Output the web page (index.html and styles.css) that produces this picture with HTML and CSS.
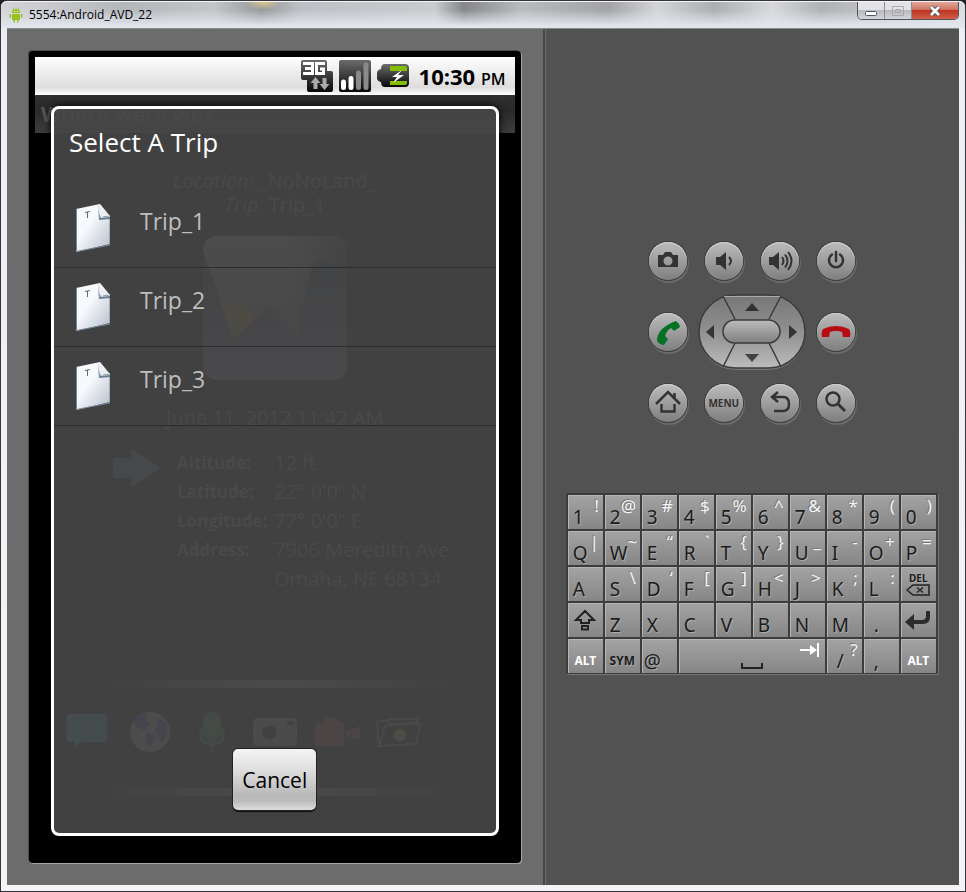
FILE: index.html
```
<!DOCTYPE html>
<html lang="en">
<head>
<meta charset="utf-8">
<meta name="viewport" content="width=device-width, initial-scale=1">
<title>5554:Android_AVD_22</title>
<link rel="stylesheet" href="styles.css">
</head>
<body>
<div class="window">
  <header class="titlebar">
    <svg class="droid" viewBox="0 0 14 16" aria-hidden="true"><path fill="#97c024" d="M3 6V5q0-3 4-3t4 3v1zM3 7h8v6H9.500v2.500H8V13H6v2.500H4.500V13H3zM.5 7H2v4H.5zM12 7h1.500v4H12z"/><path stroke="#97c024" d="M4 .5l1.500 2M10 .5l-1.500 2"/><path fill="#fff" d="M5 4h1v1H5zM8 4h1v1H8z"/></svg>
    <span class="window-title">5554:Android_AVD_22</span>
    <div class="window-controls">
      <button class="wc" aria-label="Minimize"><svg viewBox="0 0 14 12"><rect x="1.500" y="6.500" width="11" height="4" rx="1" fill="#fff" stroke="#535666"/></svg></button>
      <button class="wc" aria-label="Maximize"><svg viewBox="0 0 14 12"><path fill="none" stroke="#aaa" d="M1.500 1.500h11v9h-11zM4.500 4.500h5v3h-5z"/></svg></button>
      <button class="wc wc-close" aria-label="Close"><svg viewBox="0 0 14 12"><path d="M3 2l8 8M11 2l-8 8" stroke="#50505e" stroke-width="4.500"/><path d="M3 2l8 8M11 2l-8 8" stroke="#fff" stroke-width="2.500"/></svg></button>
    </div>
  </header>

  <main class="client">
    <section class="phone-pane">
      <div class="device">
        <div class="statusbar">
          <svg class="st" viewBox="0 0 32 32" aria-hidden="true"><defs><linearGradient id="dk" x2="0" y2="1"><stop stop-color="#6b6b6b"/><stop offset="1" stop-color="#080808"/></linearGradient></defs><path fill="url(#dk)" d="M2 0h22q2 0 2 2v9h4q2 0 2 2v17q0 2-2 2H8q-2 0-2-2V20H2q-2 0-2-2V2q0-2 2-2z"/><path fill="none" stroke="#fff" stroke-width="3" d="M2 3.500h9.500v10H2M4 8.500h7M24 3.500h-8.500v10h7V9H19"/><path fill="#aaa" d="M14.500 17l5 6h-3v6h-4v-6h-3zM23.500 30l5-6h-3v-6h-4v6h-3z"/></svg>
          <svg class="st" viewBox="0 0 32 32" aria-hidden="true"><rect width="32" height="32" rx="2" fill="url(#dk)"/><g stroke-width="5" stroke-linecap="round"><path stroke="#fff" d="M4.500 22v5.500M12 18.500v9"/><path stroke="#8a8a8a" d="M19.500 13v14.500M27 5v22.500"/></g></svg>
          <svg class="st" viewBox="0 0 32 32" aria-hidden="true"><path fill="url(#dk)" d="M8 4h20q4 0 4 4v15q0 4-4 4H8q-4 0-4-5-4-1-4-4v-5q0-3 4-4 0-5 4-5z"/><path fill="#86bd00" d="M13 6h15q2 0 2 2v3H13zM13 21h17v2q0 2-2 2H13z"/><path fill="#fff" d="M25 10l-10 7h5l-4 6 11-8h-6z"/></svg>
          <span class="clock">10:30 <small>PM</small></span>
        </div>
        <div class="stage">
          <div class="app">
            <h1 class="app-title">Where were we?</h1>
            <div class="app-body">
              <p class="where"><i>Location:</i> _NoNoLand_<br><i>Trip:</i> Trip_1</p>
              <svg class="photo" viewBox="0 0 144 144" aria-hidden="true"><defs><linearGradient id="sky" x2="0" y2="1"><stop stop-color="#7c8a7c"/><stop offset="1" stop-color="#5a505c"/></linearGradient><linearGradient id="land" x2="0" y2="1"><stop stop-color="#10202c"/><stop offset=".4" stop-color="#34384c"/><stop offset="1" stop-color="#706890"/></linearGradient><linearGradient id="fade" x2="1" y2="0"><stop offset=".6" stop-color="#000" stop-opacity="0"/><stop offset="1" stop-color="#000" stop-opacity=".7"/></linearGradient><clipPath id="pc"><rect width="144" height="144" rx="14"/></clipPath></defs><g clip-path="url(#pc)"><path fill="url(#sky)" d="M0 0h144v144H0z"/><path fill="url(#fade)" d="M0 0h144v80H0z"/><path fill="#a0702c" d="M14 68q24-8 38 16L30 104z"/><path fill="#70803c" d="M18 80l22 10-10 14z"/><path fill="url(#land)" d="M0 14l30 90 36-34 30 28q8-60 16-72h32v118H0z"/></g></svg>
              <p class="when">June 11, 2012 11:42 AM</p>
              <div class="facts">
                <svg class="arrow" viewBox="0 0 48 40" aria-hidden="true"><path fill="#3c688c" d="M0 10h18V0l30 20-30 20V30H0z"/></svg>
                <dl>
                  <dt>Altitude:</dt><dd>12 ft</dd>
                  <dt>Latitude:</dt><dd>22° 0'0" N</dd>
                  <dt>Longitude:</dt><dd>77° 0'0" E</dd>
                  <dt>Address:</dt><dd>7906 Meredith Ave<br>Omaha, NE 68134</dd>
                </dl>
              </div>
              <div class="glow"></div>
              <div class="tools">
                <svg viewBox="0 0 44 44" aria-hidden="true"><path fill="#289098" d="M4 4h32q4 0 4 4v20q0 4-4 4H14l-7 5 1-5H4q-4 0-4-4V8q0-4 4-4z"/></svg>
                <svg viewBox="0 0 44 44" aria-hidden="true"><circle cx="21" cy="22" r="20" fill="#88888e"/><path fill="#3838a0" d="M4 10q8-8 16-5l-4 5 6 4-8 6-8-4zM17 22l10 3-6 13-4-8zM27 8l10 4 2 12-6 8-8-12 5-5z"/></svg>
                <svg viewBox="0 0 44 44" aria-hidden="true"><rect x="12" y="2" width="18" height="30" rx="9" fill="#288048"/><path fill="none" stroke="#288048" stroke-width="3" d="M10 18v7q0 9 11 9t11-9v-7M21 34v9"/></svg>
                <svg viewBox="0 0 44 44" aria-hidden="true"><path fill="#7c7c84" fill-rule="evenodd" d="M5 8h34q5 0 5 5v18q0 5-5 5H5q-5 0-5-5V13q0-5 5-5zm14 8a7 7 0 100 13 7 7 0 000-13zm15-5v4h7v-4z"/></svg>
                <svg viewBox="0 0 44 44" aria-hidden="true"><path fill="#8c3848" d="M4 12h4l3-4h11l3 4h4v24H0V14zM31 22l14-6v14l-14-4z"/></svg>
                <svg viewBox="0 0 44 44" aria-hidden="true"><path fill="none" stroke="#8c6048" stroke-width="2" d="M2 36L0 12l10-2 3 4h30l-4 20zM2 36l6-20 32-4v-3H12"/><circle cx="23" cy="25" r="6" fill="#a88838"/></svg>
              </div>
              <div class="glow glow-low"></div>
            </div>
          </div>

          <div class="dialog" role="dialog" aria-labelledby="dlg-title">
            <h2 id="dlg-title">Select A Trip</h2>
            <svg width="0" height="0" class="defs" aria-hidden="true"><defs><linearGradient id="paper" x2="1" y2="1"><stop offset=".4" stop-color="#f7f9fd"/><stop offset="1" stop-color="#b3bdc8"/></linearGradient><symbol id="page" viewBox="0 0 34 48"><path fill="url(#paper)" d="M0 5L24 0l10 12v28L0 48z"/><path fill="none" stroke="#73879d" d="M.5 5v42.500L34 41V13"/><path fill="#667b8c" d="M22 1l2 13 10-1v2l-11 1z"/><path fill="#8799a8" d="M22 1q2 8 1 14 5-3 11-2-8-3-11-12z"/><path fill="#e9eff5" d="M24 0q0 8 10 12-6-1-9 2-3-6-3-13z"/><path fill="none" stroke="#666" d="M9 8.500l5-1M11.500 8v6"/></symbol></defs></svg>
            <ul class="trips">
              <li><button class="trip"><svg><use href="#page"/></svg><span>Trip_1</span></button></li>
              <li><button class="trip"><svg><use href="#page"/></svg><span>Trip_2</span></button></li>
              <li><button class="trip"><svg><use href="#page"/></svg><span>Trip_3</span></button></li>
            </ul>
            <button class="cancel">Cancel</button>
          </div>
        </div>
      </div>
    </section>

    <section class="control-pane">
      <div class="pad">
        <button class="round" aria-label="Camera"><svg viewBox="0 0 38 38"><path fill="#333" fill-rule="evenodd" d="M9 13h5l2-3h6l2 3h5v12H9zm10 1.500a4.500 4.500 0 100 9 4.500 4.500 0 000-9z"/></svg></button>
        <button class="round" aria-label="Volume down"><svg viewBox="0 0 38 38"><path fill="#333" d="M11 15h4l6-5v18l-6-5h-4z"/><path fill="none" stroke="#333" stroke-width="2" d="M24 15q4 4 0 8"/></svg></button>
        <button class="round" aria-label="Volume up"><svg viewBox="0 0 38 38"><path fill="#333" d="M8 15h4l6-5v18l-6-5H8z"/><path fill="none" stroke="#333" stroke-width="2" d="M21 15q3 4 0 8M24 12.500q5 6.500 0 13M27 10q7 9 0 18"/></svg></button>
        <button class="round" aria-label="Power"><svg viewBox="0 0 38 38"><path fill="none" stroke="#333" stroke-width="2.500" stroke-linecap="round" d="M19 10v9M15 12.500a7 7 0 108 0"/></svg></button>

        <button class="round" aria-label="Call"><svg viewBox="0 0 38 38"><path fill="#047125" d="M27 8q3 2 4 6l-6 4-3-3q-4 2-6 8l3 3-4 6q-4 0-7-4Q8 15 27 8z"/></svg></button>
        <div class="dpad">
          <svg class="dpad-face" viewBox="0 0 108 76" aria-hidden="true"><defs><linearGradient id="ring" x2="0" y2="1"><stop stop-color="#777"/><stop offset=".5" stop-color="#909090"/><stop offset="1" stop-color="#bcbcbc"/></linearGradient><linearGradient id="mid" x2="0" y2="1"><stop stop-color="#bbb"/><stop offset="1" stop-color="#808080"/></linearGradient></defs><rect x="1" y="2" width="106" height="74" rx="37" fill="#777"/><rect x="1" y="1" width="106" height="73" rx="36.500" fill="url(#ring)" stroke="#3b3b3b" stroke-width="1.500"/><path fill="none" stroke="#aaa" d="M26 2.500h57"/><path fill="none" stroke="#3b3b3b" stroke-width="1.500" d="M25 2l12 23M83 2L71 25M37 49L25 73M71 49l12 24"/><rect x="25" y="26" width="57" height="23" rx="11.500" fill="url(#mid)" stroke="#3b3b3b" stroke-width="1.500"/></svg>
          <button class="d-up" aria-label="Up"><svg viewBox="0 0 14 8"><path fill="#333" d="M0 8l7-8 7 8z"/></svg></button>
          <button class="d-left" aria-label="Left"><svg viewBox="0 0 8 14"><path fill="#333" d="M8 0v14L0 7z"/></svg></button>
          <button class="d-mid" aria-label="Select"></button>
          <button class="d-right" aria-label="Right"><svg viewBox="0 0 8 14"><path fill="#333" d="M0 0v14l8-7z"/></svg></button>
          <button class="d-down" aria-label="Down"><svg viewBox="0 0 14 8"><path fill="#444" d="M0 0h14L7 8z"/></svg></button>
        </div>
        <button class="round" aria-label="End call"><svg viewBox="0 0 38 38"><path fill="#b80c14" d="M5 24q-1-5 1-8 13-6 26 0 2 3 1 8l-7 0-1-5q-6-2-12 0l-1 5z"/></svg></button>

        <button class="round" aria-label="Home"><svg viewBox="0 0 38 38"><path fill="none" stroke="#333" stroke-width="2.500" d="M7 20L19 8l12 12M25.500 14V9M12.500 20v7.500h13V20"/></svg></button>
        <button class="round menu">MENU</button>
        <button class="round" aria-label="Back"><svg viewBox="0 0 38 38"><path fill="none" stroke="#333" stroke-width="2.500" d="M17 8l-6 5 6 5M11 13h11q6 0 6 7t-6 7h-9"/></svg></button>
        <button class="round" aria-label="Search"><svg viewBox="0 0 38 38"><circle cx="16" cy="15" r="6.500" fill="none" stroke="#333" stroke-width="2.500"/><path stroke="#333" stroke-width="3" d="M21 20l7 7"/></svg></button>
      </div>

      <div class="keyboard">
        <button>1<sup>!</sup></button><button>2<sup>@</sup></button><button>3<sup>#</sup></button><button>4<sup>$</sup></button><button>5<sup>%</sup></button><button>6<sup>^</sup></button><button>7<sup>&amp;</sup></button><button>8<sup>*</sup></button><button>9<sup>(</sup></button><button>0<sup>)</sup></button>
        <button>Q<sup>|</sup></button><button>W<sup>~</sup></button><button>E<sup>“</sup></button><button>R<sup>`</sup></button><button>T<sup>{</sup></button><button>Y<sup>}</sup></button><button>U<sup>_</sup></button><button>I<sup>-</sup></button><button>O<sup>+</sup></button><button>P<sup>=</sup></button>
        <button>A</button><button>S<sup>\</sup></button><button>D<sup>‘</sup></button><button>F<sup>[</sup></button><button>G<sup>]</sup></button><button>H<sup>&lt;</sup></button><button>J<sup>&gt;</sup></button><button>K<sup>;</sup></button><button>L<sup>:</sup></button>
        <button class="key-icon key-del"><span>DEL</span><svg viewBox="0 0 24 12" aria-hidden="true"><path fill="none" stroke="#222" stroke-width="1.500" d="M1 6l6-5h16v10H7zM11 3.500l6 5M17 3.500l-6 5"/></svg></button>
        <button class="key-icon" aria-label="Shift"><svg class="k-shift" viewBox="0 0 22 22"><path fill="none" stroke="#222" stroke-width="2" d="M2 11l9-9 9 9h-5v3H7v-3zM8 17h6v3.500H8z"/></svg></button>
        <button>Z</button><button>X</button><button>C</button><button>V</button><button>B</button><button>N</button><button>M</button><button class="dot">.</button>
        <button class="key-icon" aria-label="Enter"><svg class="k-enter" viewBox="0 0 26 20"><path fill="#2d2d2d" d="M0 12l9-8v6h8q4 0 4-4V1h4v6q0 7-7 7H9v6z"/></svg></button>
        <button class="key-icon key-word light">ALT</button><button class="key-icon key-word">SYM</button><button class="at">@</button>
        <button class="key-icon space" aria-label="Space"><svg class="k-bar" viewBox="0 0 22 7"><path fill="none" stroke="#222" stroke-width="2" d="M1 0v5h20V0"/></svg><svg class="k-tab" viewBox="0 0 19 14"><path fill="none" stroke="#fff" stroke-width="2" d="M0 7h13M18 0v14"/><path fill="#fff" d="M10 2l7 5-7 5z"/></svg></button>
        <button class="dot">/<sup>?</sup></button><button class="dot">,</button><button class="key-icon key-word light">ALT</button>
      </div>
    </section>
  </main>
</div>
</body>
</html>
```
FILE: styles.css
```
* { box-sizing: border-box; }
body { margin: 0; font-family: "Open Sans", "Noto Sans", sans-serif; background: #222; }
h1, h2, p, dl, dd, ul { margin: 0; padding: 0; font-weight: normal; }
ul { list-style: none; }
button { font: inherit; padding: 0; border: 0; background: none; color: inherit; }
svg { display: block; overflow: visible; flex: none; }

/* Window frame */
.window {
  min-height: 100vh;
  display: flex;
  flex-direction: column;
  padding: 0 6px 6px;
  border: 1px solid #34343a;
  border-radius: 7px 7px 0 0;
  background: linear-gradient(#c9cbcf, #eceef3 28px, #f2f1f5 60%, #f4f3f6);
}
.titlebar {
  height: 27px;
  margin: 0 -6px;
  padding: 0 0 0 8px;
  display: flex;
  align-items: center;
  gap: 6px;
  border-top: 1px solid #f4f4f6;
  border-radius: 6px 6px 0 0;
  background:
    radial-gradient(ellipse 18px 8px at 262px 0, #d9c98a, transparent),
    linear-gradient(transparent 30%, #e2e5ed 92%),
    linear-gradient(90deg, #d4d5d9 0, #b4b7ba 13%, #c3c6c9 22%, #97999b 27%, #bdc0c4 31%, #c9cccf 45%, #85878a 48%, #b9bcbf 54%, #a1a3a6 63%, #d3d5d7 68%, #acafb1 74%, #d7d9dc 80%, #b0b3b4 85%, #dcdde1 100%);
}
.droid { width: 14px; height: 16px; }
.window-title { flex: 1; font-size: 12px; line-height: 16px; color: #000; }
.window-controls { display: flex; align-self: flex-start; margin-right: 6px; border: 1px solid #55565c; border-top: 0; border-radius: 0 0 5px 5px; overflow: hidden; }
.wc { width: 27px; height: 17px; display: grid; place-items: center; border-right: 1px solid #8b8c92; background: linear-gradient(#e3e3e5 45%, #b9bac0 50%, #d4d5da); }
.wc svg { width: 14px; height: 12px; }
.wc-close { width: 46px; border: 0; background: linear-gradient(#e0a295 5%, #d07461 45%, #bd3421 50%, #d0604a); }

.client { flex: 1; display: grid; grid-template-columns: 9fr 7fr; border-top: 1px solid #8b8b8b; }

/* Phone */
.phone-pane { padding: 22px; background: #6c6c6c; display: flex; }
.device {
  flex: 1;
  display: flex;
  flex-direction: column;
  padding: 6px;
  border-radius: 4px;
  background: #000;
  box-shadow: 1px 1px 0 #a5a5a5, -1px -1px 0 #4b4b4b;
}
.statusbar {
  height: 38px;
  padding-right: 9px;
  display: flex;
  align-items: center;
  justify-content: flex-end;
  gap: 6px;
  background: linear-gradient(#fff, #dedcdd 80%, #fff);
}
.st { width: 32px; height: 32px; }
.clock { margin-left: 4px; font-size: 22px; font-weight: 700; color: #000; white-space: nowrap; }
.clock small { font-size: 16px; font-weight: 600; }

.stage { flex: 1; display: grid; }
.app, .dialog { grid-area: 1 / 1; }
.app { color: #6c6c6c; }
.app-title { height: 38px; padding-left: 6px; font-size: 21px; font-weight: 700; line-height: 38px; color: #575757; background: linear-gradient(#303030, #2a2a2a 40%, #3d3d3d); }
.app-body { padding: 36px 18px 0 32px; display: flex; flex-direction: column; }
.where, .when { text-align: center; font-size: 20px; line-height: 24px; margin-left: -14px; }
.photo { width: 144px; height: 144px; margin: 19px 0 0 136px; align-self: flex-start; }
.when { margin-top: 26px; }
.facts { display: flex; gap: 16px; padding: 18px 0 0 46px; }
.arrow { width: 48px; height: 40px; }
.facts dl { display: grid; grid-template-columns: 97px 1fr; line-height: 29px; font-size: 20px; }
.facts dt { font-size: 17px; font-weight: 700; }
.glow { height: 8px; margin: 87px 32px 0 24px; background: linear-gradient(90deg, transparent, #504a54 30%, #808080 50%, #504a54 70%, transparent); }
.tools { display: flex; gap: 18px; margin: 22px 0 0; }
.tools svg { width: 44px; height: 44px; }
.glow-low { margin-top: 34px; }

.dialog {
  position: relative;
  margin: 11px 16px 21px;
  padding-bottom: 23px;
  display: flex;
  flex-direction: column;
  border: 3px solid #fff;
  border-radius: 8px;
  background: rgba(71, 71, 71, .92);
  box-shadow: 0 0 8px #000;
}
.dialog h2 { padding: 13px 15px 0; font-size: 26px; line-height: 40px; color: #fff; }
.defs { height: 0; }
.trips { margin-top: 27px; }
.trips li { border-bottom: 1px solid #2d2d2d; }
.trip { width: 100%; height: 78px; padding: 15px 22px 0; display: flex; align-items: flex-start; gap: 30px; font-size: 23px; line-height: 34px; color: #bebebe; }
.trip svg { width: 34px; height: 48px; }
.cancel {
  align-self: center;
  min-width: 83px;
  height: 61px;
  margin-top: auto;
  padding: 0 9px;
  border-radius: 5px;
  font-size: 21px;
  color: #000;
  background: linear-gradient(#f5f4f5, #e3e2e3 30%, #b9b9b9 75%, #bbb 85%, #ddd);
  box-shadow: 0 0 0 1px #222, 0 2px 1px #111;
}

/* Hardware controls */
.control-pane {
  padding-top: 2px;
  display: flex;
  flex-direction: column;
  align-items: center;
  justify-content: center;
  gap: 71px;
  background: #525252;
  border-left: 2px solid #474747;
  box-shadow: inset 1px 0 0 #6a6a6a;
}
.pad { display: grid; grid-template-columns: repeat(4, 56px); row-gap: 33px; place-items: center; }
.round {
  width: 38px;
  height: 38px;
  border-radius: 50%;
  background: linear-gradient(#bcbcbc, #7f7f7f);
  box-shadow: inset 0 1px 1px #d0d0d0, 0 0 0 1px #3b3b3b, 1px 2px 0 1px #6b6b6b;
}
.round svg { width: 38px; height: 38px; }
.menu { font-size: 10px; font-weight: 700; color: #333; }
.dpad { grid-column: span 2; height: 38px; display: grid; grid-template: 25px 26px 25px / 25px 58px 25px; align-content: center; }
.dpad-face { grid-area: 1 / 1 / -1 / -1; width: 108px; height: 76px; }
.dpad button { display: grid; place-items: center; }
.d-up { grid-area: 1 / 2; }
.d-left { grid-area: 2 / 1; }
.d-mid { grid-area: 2 / 2; }
.d-right { grid-area: 2 / 3; }
.d-down { grid-area: 3 / 2; }
.d-up svg, .d-down svg { width: 14px; height: 8px; }
.d-left svg, .d-right svg { width: 8px; height: 14px; }

.keyboard {
  display: grid;
  grid-template-columns: repeat(10, 35px);
  grid-auto-rows: 34px;
  gap: 2px;
  padding: 2px 2px 1px;
  font-family: "Noto Sans", sans-serif;
  background: #3c3c3c;
  box-shadow: 1px 1px 0 #757575;
}
.keyboard button {
  display: flex;
  justify-content: space-between;
  padding: 0 4px 0 5px;
  font-size: 19px;
  line-height: 44px;
  color: #1c1c1c;
  background: linear-gradient(#a3a3a3, #868686);
  box-shadow: inset 1px 1px 0 #b5b5b5;
  text-shadow: 1px 1px 0 #aaa;
  white-space: nowrap;
}
.keyboard sup { font-size: 17px; line-height: 22px; vertical-align: baseline; color: #f4f4f4; text-shadow: -1px -1px 0 #777; }
.keyboard .dot { padding-left: 10px; }
.keyboard .at { padding-left: 2px; }
.keyboard .key-icon { padding: 0; flex-direction: column; justify-content: center; align-items: center; line-height: 12px; }
.keyboard .key-word { font-size: 12px; font-weight: 700; padding-top: 10px; }
.keyboard .light { color: #fff; text-shadow: none; }
.key-del span { font-size: 10px; font-weight: 700; }
.key-del svg { width: 24px; height: 12px; }
.k-shift { width: 22px; height: 22px; }
.k-enter { width: 26px; height: 20px; }
.keyboard .space { grid-column: span 4; display: grid; grid-template-columns: 1fr 22px 1fr; align-items: start; padding: 4px 6px; }
.k-bar { grid-column: 2; grid-row: 1; width: 22px; height: 7px; margin-top: 20px; }
.k-tab { grid-column: 3; grid-row: 1; justify-self: end; width: 19px; height: 14px; }
```
